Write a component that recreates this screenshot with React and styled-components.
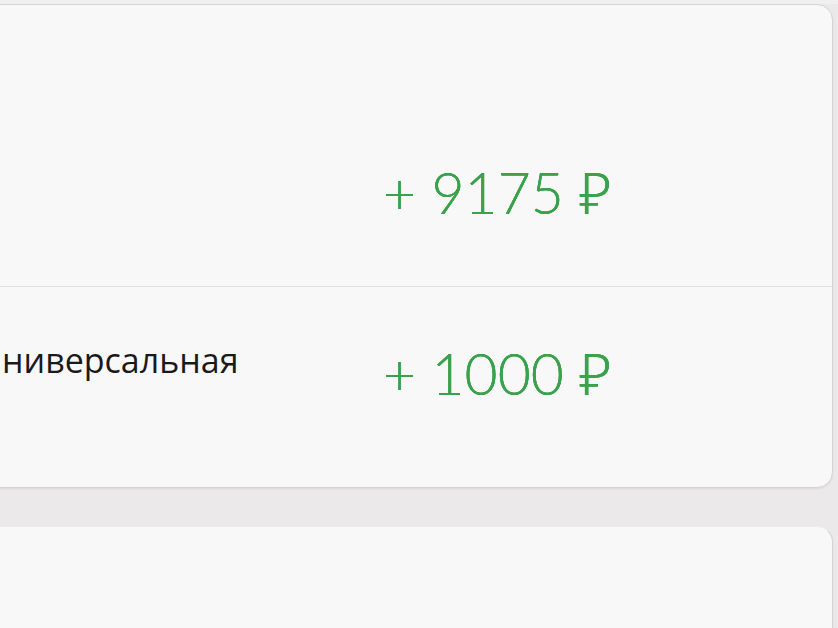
import React from "react";
import styled, { createGlobalStyle } from "styled-components";

const GlobalStyle = createGlobalStyle`
  html, body {
    margin: 0;
    padding: 0;
    background: #ebe9ea;
    overflow: hidden;
  }
`;

const Page = styled.div`
  width: 838px;
  height: 628px;
  overflow: hidden;
  background: #ebe9ea;
  padding: 4px 5px 0 0;
  box-sizing: border-box;
  display: flex;
  flex-direction: column;
  gap: 38px;
  box-shadow: inset 0 4px 0 #f1f0f0;
`;

const Card = styled.div`
  margin-left: -20px;
  background: #f8f8f8;
  border: 1px solid #d6d5d5;
  border-top-color: ${(p) => (p.$soft ? "#eeeded" : "#d6d5d5")};
  border-radius: 16px;
  box-shadow: 0 1px 2px rgba(0, 0, 0, 0.08);
  flex-shrink: 0;
  height: ${(p) => p.$height}px;
  box-sizing: border-box;
  overflow: hidden;
`;

const Row = styled.div`
  display: grid;
  grid-template-columns: 381px 1fr;
  align-items: start;
  padding: ${(p) => p.$top}px 0 0 21px;
  height: ${(p) => p.$height}px;
  box-sizing: border-box;
  & + & {
    border-top: 1px solid #e0dfdf;
  }
`;

const Label = styled.div`
  font-family: "Open Sans", "Noto Sans", sans-serif;
  font-size: 34px;
  line-height: 1;
  color: #1a1a1a;
  white-space: nowrap;
  padding-top: 3px;
`;

const Amount = styled.div`
  font-family: Lato, "Noto Sans", sans-serif;
  font-weight: 300;
  font-size: 57px;
  line-height: 1;
  color: #3ba24c;
  white-space: nowrap;
  text-shadow: 0 0 0.6px #3ba24c, 0 0 0.6px #3ba24c;
  padding-top: ${(p) => p.$offset || 0}px;
`;

const rows = [
  { label: "", amount: "+ 9175 ₽", top: 159, height: 281, offset: 0 },
  { label: "ниверсальная", amount: "+ 1000 ₽", top: 53, height: 200, offset: 5 },
];

export default function App() {
  return (
    <>
      <GlobalStyle />
      <Page>
        <Card $height={484}>
          {rows.map((r, i) => (
            <Row key={i} $top={r.top} $height={r.height}>
              <Label>{r.label}</Label>
              <Amount $offset={r.offset}>{r.amount}</Amount>
            </Row>
          ))}
        </Card>
        <Card $height={200} $soft />
      </Page>
    </>
  );
}
